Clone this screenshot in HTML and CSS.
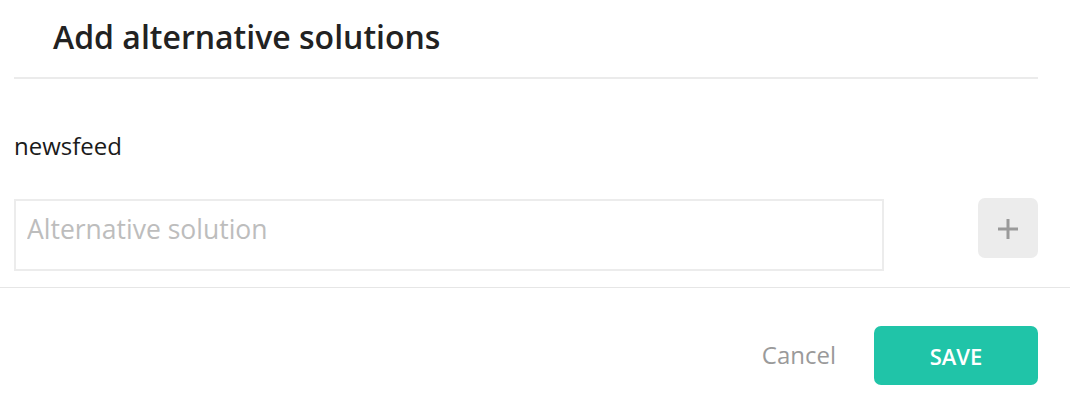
FILE: index.html
```html
<!DOCTYPE html>
<html lang="en">

<head>
    <meta charset="UTF-8">
    <meta name="viewport" content="width=device-width, initial-scale=1.0">
    <title>Add alternative solutions</title>
    <link rel="stylesheet" href="styles.css">
</head>

<body>

    <div class="modal">
        <div class="modal-header">
            <h1 class="modal-title">Add alternative solutions</h1>
        </div>

        <div class="modal-body">
            <p class="problem-name">newsfeed</p>

            <div class="add-row">
                <input type="text" class="solution-input" placeholder="Alternative solution">
                <button class="add-button" aria-label="Add">
                    <svg width="22" height="22" viewBox="0 0 22 22">
                        <path d="M11 1v20M1 11h20" stroke="#9a9a9a" stroke-width="3" fill="none" />
                    </svg>
                </button>
            </div>
        </div>

        <div class="modal-footer">
            <button class="cancel-button">Cancel</button>
            <button class="save-button">SAVE</button>
        </div>
    </div>

</body>

</html>
```

FILE: styles.css
```css
/* Modal for adding alternative solutions */
body {
    margin: 0;
    font-family: "Open Sans", "Noto Sans", sans-serif;
    background-color: #fff;
    color: #222;
}

.modal {
    width: 1070px;
}

.modal-header {
    margin: 0 32px 0 14px;
    padding: 0 0 0 39px;
    height: 77px;
    border-bottom: 2px solid #ebebeb;
    display: flex;
    align-items: center;
}

.modal-title {
    margin: 0;
    font-size: 32px;
    font-weight: 600;
    color: #222;
    position: relative;
    top: -2px;
}

.modal-body {
    padding: 51px 32px 16px 14px;
    border-bottom: 1px solid #e6e6e6;
}

.problem-name {
    margin: 0 0 36px;
    font-size: 24px;
    line-height: 32px;
    color: #1a1a1a;
}

.add-row {
    display: flex;
    align-items: flex-start;
    justify-content: space-between;
}

.solution-input {
    box-sizing: border-box;
    width: 870px;
    height: 72px;
    margin: 1px 0 0;
    padding: 0 11px 12px;
    border: 2px solid #ececec;
    font-family: inherit;
    font-size: 26.5px;
    color: #333;
    outline: none;
}

.solution-input::placeholder {
    color: #bdbdbd;
}

.add-button {
    width: 60px;
    height: 60px;
    border: none;
    border-radius: 7px;
    background-color: #ececec;
    display: flex;
    align-items: center;
    justify-content: center;
    padding: 2px 0 0;
    cursor: pointer;
}

.modal-footer {
    display: flex;
    justify-content: flex-end;
    align-items: center;
    gap: 38px;
    padding: 38px 32px 22px 14px;
}

.cancel-button {
    border: none;
    background: none;
    padding: 0 0 3px;
    font-family: inherit;
    font-size: 24px;
    color: #9a9a9a;
    cursor: pointer;
}

.save-button {
    width: 164px;
    height: 59px;
    border: none;
    border-radius: 7px;
    background-color: #20c4a8;
    color: #fff;
    font-family: inherit;
    font-size: 22px;
    font-weight: 600;
    cursor: pointer;
}
```
